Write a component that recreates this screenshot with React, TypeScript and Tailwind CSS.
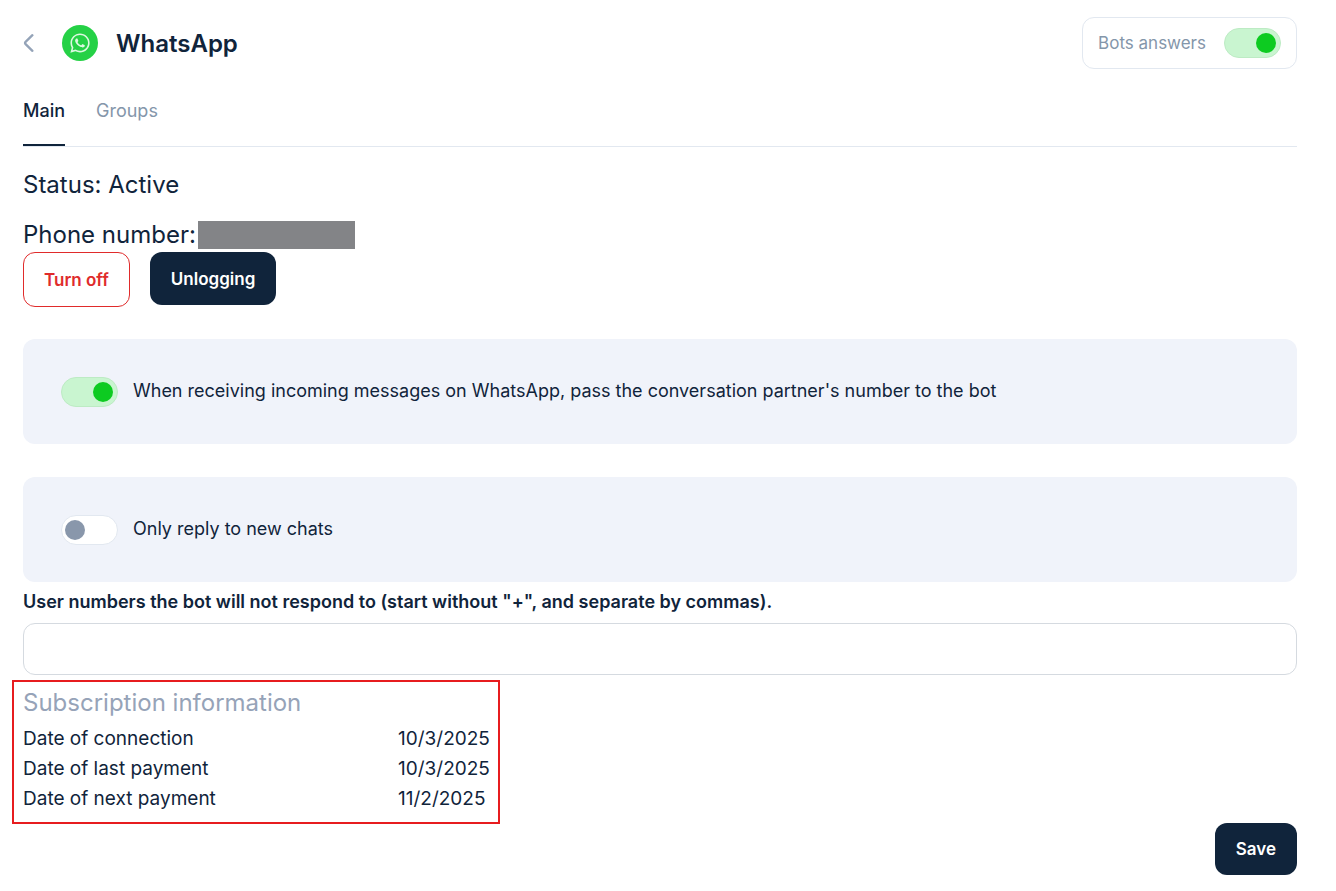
import { useState } from "react";
import { FaWhatsapp } from "react-icons/fa";

type SwitchProps = {
  id: string;
  checked: boolean;
  onChange: (value: boolean) => void;
};

function Switch({ id, checked, onChange }: SwitchProps) {
  return (
    <input
      id={id}
      type="checkbox"
      role="switch"
      checked={checked}
      onChange={(e) => onChange(e.target.checked)}
      className="flex h-[30px] w-[57px] shrink-0 cursor-pointer appearance-none items-center rounded-full border border-[#e2e8f0] bg-white px-[3px] before:block before:size-5 before:rounded-full before:bg-[#8997ab] checked:justify-end checked:border-[#bdebc4] checked:bg-[#c9f5d0] checked:px-1 checked:before:bg-[#0dcb21]"
    />
  );
}

function OptionPanel({ id, label, initial }: { id: string; label: string; initial: boolean }) {
  const [on, setOn] = useState(initial);
  return (
    <div className="flex h-[105px] items-center gap-[15px] rounded-xl bg-[#f0f3fa] px-[38px]">
      <Switch id={id} checked={on} onChange={setOn} />
      <label htmlFor={id} className="pb-0.5 text-lg">
        {label}
      </label>
    </div>
  );
}

const dates = [
  { label: "Date of connection", value: "10/3/2025" },
  { label: "Date of last payment", value: "10/3/2025" },
  { label: "Date of next payment", value: "11/2/2025" },
];

export default function App() {
  const [answers, setAnswers] = useState(true);
  const [numbers, setNumbers] = useState("");

  return (
    <main className="min-h-screen bg-white pt-[17px] pr-[39px] pb-4 pl-[23px] font-['Inter','Liberation_Sans',sans-serif] text-[#10243b]">
      <header className="flex items-center justify-between">
        <div className="flex items-center">
          <button type="button" aria-label="Back" className="mr-[27px] flex w-3 text-[#94a3b8]">
            <svg viewBox="0 0 12 20" className="h-5 w-3" fill="none" stroke="currentColor" strokeWidth="2.3" strokeLinecap="round" strokeLinejoin="round">
              <path d="M9.4 2.2 2.6 8.8a1.8 1.8 0 0 0 0 2.4L9.4 17.8" />
            </svg>
          </button>
          <span className="mr-[18px] flex size-9 items-center justify-center rounded-full bg-[#25d146] text-[#dcf8e1]">
            <FaWhatsapp className="size-[22px]" />
          </span>
          <h1 className="pt-0.5 text-2xl font-semibold">WhatsApp</h1>
        </div>
        <div className="flex h-[52px] items-center gap-[18px] rounded-xl border border-[#e2e8f0] px-[15px]">
          <label htmlFor="bots-answers" className="pt-0.5 text-[17px] text-[#8496aa]">
            Bots answers
          </label>
          <Switch id="bots-answers" checked={answers} onChange={setAnswers} />
        </div>
      </header>

      <nav className="mt-6 flex gap-[31px] border-b border-[#e2e8f0] text-lg">
        <a href="#main" aria-current="page" className="border-b-2 border-[#10243b] pt-1 pb-[19px] font-medium">
          Main
        </a>
        <a href="#groups" className="pt-1 text-[#8496aa]">
          Groups
        </a>
      </nav>

      <p className="mt-[18px] text-2xl leading-10">Status: Active</p>
      <p className="mt-[10px] flex items-center gap-0.5 text-2xl leading-10">
        Phone number:
        <span className="h-7 w-[157px] bg-[#838487]" />
      </p>
      <div className="-mt-[3px] flex items-start gap-5 text-[17px] font-semibold">
        <button type="button" className="h-[55px] rounded-xl border border-[#e02b2b] px-5 pt-0.5 text-[#e02b2b]">
          Turn off
        </button>
        <button type="button" className="h-[53px] rounded-xl bg-[#10243b] px-[21px] pt-0.5 text-white">
          Unlogging
        </button>
      </div>

      <div className="mt-8 flex flex-col gap-[33px]">
        <OptionPanel
          id="pass-number"
          label="When receiving incoming messages on WhatsApp, pass the conversation partner's number to the bot"
          initial={true}
        />
        <OptionPanel id="new-chats" label="Only reply to new chats" initial={false} />
      </div>

      <label htmlFor="ignored" className="mt-[6px] block text-lg font-semibold">
        User numbers the bot will not respond to (start without "+", and separate by commas).
      </label>
      <input
        id="ignored"
        type="text"
        value={numbers}
        onChange={(e) => setNumbers(e.target.value)}
        className="mt-[7px] block h-[52px] w-full rounded-xl border border-[#d5dae0] px-4 text-lg"
      />

      <section className="mt-[5px] -ml-[11px] h-36 w-[488px] max-w-full border-2 border-[#e71c1f] px-[9px]">
        <h2 className="text-2xl leading-[42px] text-[#96a3b8]">Subscription information</h2>
        <dl className="grid grid-cols-[375px_1fr] text-[19px] leading-[30px]">
          {dates.map((d) => (
            <div key={d.label} className="contents">
              <dt>{d.label}</dt>
              <dd>{d.value}</dd>
            </div>
          ))}
        </dl>
      </section>

      <div className="-mt-px flex justify-end">
        <button type="button" className="h-[52px] rounded-xl bg-[#10243b] px-[21px] pt-0.5 text-[17px] font-semibold text-white">
          Save
        </button>
      </div>
    </main>
  );
}
